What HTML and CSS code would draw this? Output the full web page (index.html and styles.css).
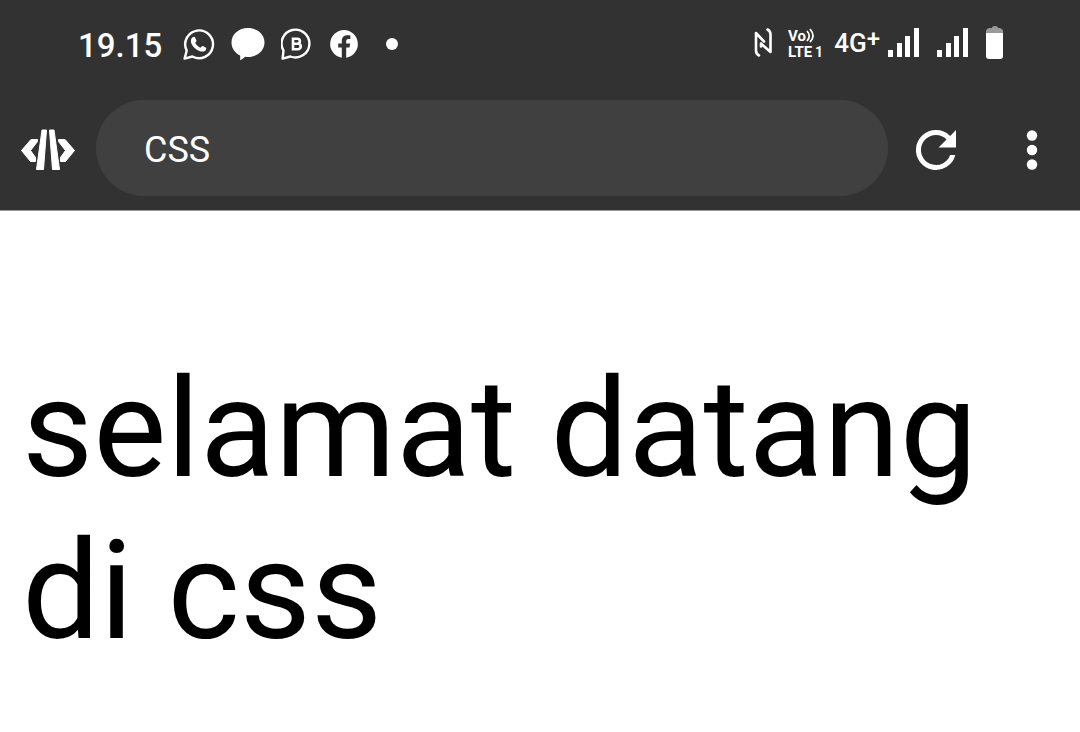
FILE: index.html
```html
<!DOCTYPE html>
<html lang="id">
<head>
<meta charset="utf-8">
<meta name="viewport" content="width=device-width, initial-scale=1">
<title>CSS</title>
<link rel="stylesheet" href="styles.css">
</head>
<body>
<header class="top">
  <div class="status">
    <div class="status-left">
      <time class="clock">19.15</time>
      <svg class="icon" width="32" height="32" viewBox="0 0 32 32" aria-label="WhatsApp">
        <path d="M1.6 30.6 3.7 22.6A13.9 13.9 0 1 1 9.4 28.5Z" fill="none" stroke="#fff" stroke-width="2.4" stroke-linejoin="round"/>
        <path d="M9.6 9.2c.6-.7 1.8-.8 2.3 0l1.500 3.100c.3.7-.1 1.200-1.200 2.500 1.200 2.400 3 4 5.400 5 1-1.200 1.500-2 2.200-1.700l3 1.500c.8.5.5 1.900-.3 2.800-1.600 1.500-3.800 1.500-6.300.500-4-1.700-6.400-4.400-7.800-7.500-.9-2.300-.6-4.600 1.200-6.200Z" fill="#fff"/>
      </svg>
      <svg class="icon" width="34" height="34" viewBox="0 0 34 34" aria-label="Pesan">
        <path d="M17 1C26.500 1 33.500 7.200 33.500 15.500S26 30 17 30c-1 0-2-.1-3-.2-1.200 1.600-3 2.800-5 3.400.3-1.600.3-3.200.1-4.700C4 26 .5 21.500.5 15.500.5 7.200 7.500 1 17 1Z" fill="#fff"/>
      </svg>
      <svg class="icon" width="32" height="32" viewBox="0 0 32 32" aria-label="WhatsApp Business">
        <path d="M1.600 30.600 2.500 22.600A13.900 13.900 0 1 1 9.400 28.500Z" fill="none" stroke="#fff" stroke-width="2.400" stroke-linejoin="round"/>
        <path d="M12 10.700h4.400a2.400 2.400 0 0 1 0 5h-4.400zm0 5h5a2.700 2.700 0 0 1 0 5.500h-5z" fill="none" stroke="#fff" stroke-width="2.600"/>
      </svg>
      <svg class="icon" width="30" height="28" viewBox="-1 0 30 28" aria-label="Facebook">
        <path d="M14 0a14 14 0 0 1 2.200 27.800V17.600h3.300l.7-4h-4v-2.400c0-1.400.8-2.300 2.300-2.300h1.900V5.600c-5-1-8.600.5-8.600 5.400v2.600H8.200v4h3.600v10.200A14 14 0 0 1 14 0Z" fill="#fff"/>
      </svg>
      <span class="more-dot"></span>
    </div>
    <div class="status-right">
      <svg class="icon" width="18" height="30" viewBox="0 0 18 30" aria-label="NFC">
        <path d="M5 27.500Q2 26 2 22.500V5L10 13.500M13.500 1.500Q16.500 3 16.500 6.500V24L7 15.500V18.500" fill="none" stroke="#fff" stroke-width="2.600" stroke-linejoin="round" stroke-linecap="round"/>
      </svg>
      <svg class="icon volte" width="40" height="34" viewBox="-2 -3 40 34">
        <text x="0" y="12" class="volte-text">Vo</text>
        <text x="0" y="28" class="volte-text">LTE</text>
        <text x="27" y="28" class="volte-sim">1</text>
        <path d="M19 2q4.500 5 0 10M22 0q6 7 0 13" fill="none" stroke="#fff" stroke-width="1.800"/>
      </svg>
      <span class="network">4G<span class="plus">+</span></span>
      <svg class="icon signal" width="33" height="30" viewBox="0 0 33 30" aria-label="Sinyal SIM 1">
        <path d="M0 22h5v7H0zM9 15h5v14H9zM17 8h5v21h-5zM26 0h5v29h-5z" fill="#fff"/>
      </svg>
      <svg class="icon" width="33" height="30" viewBox="0 0 33 30" aria-label="Sinyal SIM 2">
        <path d="M0 22h5v7H0zM9 15h5v14H9zM17 8h5v21h-5zM26 0h5v29h-5z" fill="#fff"/>
      </svg>
      <svg class="icon" width="18" height="34" viewBox="0 0 18 34" aria-label="Baterai">
        <path d="M0 7V5q0-2 3-3h3q0-2 3-2t3 2h2q3 1 3 3v2z" fill="#999"/>
        <path d="M0 7h17v23q0 3-3 3H3q-3 0-3-3z" fill="#fff"/>
      </svg>
    </div>
  </div>
  <div class="toolbar">
    <button class="tool" type="button" aria-label="Kode">
      <svg width="56" height="44" viewBox="0 0 56 44">
        <path d="M1.500 22.500 11 11.500H17.500V13.500L10.500 22.500 15.500 29.500V33.500H10.500ZM54.500 22.500 45 11.500H38.500V13.500L45.500 22.500 40.500 29.500V33.500H45.500Z" fill="#fff" stroke="#fff" stroke-linejoin="round"/>
        <path d="M22 2h4.500L23.500 41.500H16.500ZM34 2h-4.500L32.500 41.500H39.500Z" fill="#fff" stroke="#fff" stroke-linejoin="round"/>
      </svg>
    </button>
    <input class="address" type="text" value="CSS" aria-label="Judul halaman">
    <button class="tool" type="button" aria-label="Muat ulang">
      <svg width="60" height="62" viewBox="0 0 60 62">
        <path transform="translate(0 1) scale(2.500)" d="M17.650 6.350A7.960 7.960 0 0 0 12 4a8 8 0 1 0 7.730 10h-2.080A6 6 0 1 1 12 6c1.660 0 3.140.690 4.220 1.780L13 11h7V4z" fill="#fff"/>
      </svg>
    </button>
    <button class="tool" type="button" aria-label="Menu">
      <svg width="12" height="42" viewBox="0 0 12 42">
        <circle cx="6" cy="6.500" r="5.200" fill="#fff"/><circle cx="6" cy="21" r="5.200" fill="#fff"/><circle cx="6" cy="35.500" r="5.200" fill="#fff"/>
      </svg>
    </button>
  </div>
</header>
<main class="page">
  <p class="greeting">selamat datang di css</p>
</main>
</body>
</html>
```
FILE: styles.css
```css
* {
  box-sizing: border-box;
}

body {
  margin: 0;
  background: #fff;
  color: #000;
  font-family: Roboto, "Liberation Sans", sans-serif;
}

.top {
  background: #323232;
  color: #fff;
  border-bottom: 1px solid #999;
}

.status {
  display: flex;
  align-items: center;
  justify-content: space-between;
  height: 86px;
  padding: 0 76px 0 78px;
}

.status-left,
.status-right {
  display: flex;
  align-items: center;
  gap: 16px;
}

.status-left {
  padding-top: 1px;
}

.icon {
  display: block;
  flex: none;
}

.clock {
  margin-right: 5px;
  padding-top: 4px;
  font-size: 33px;
  font-weight: 500;
  line-height: 40px;
}

.more-dot {
  width: 12px;
  height: 12px;
  margin-left: 11px;
  border-radius: 50%;
  background: #fff;
}

.volte {
  margin: 0 -2px;
}

.volte-text {
  font-size: 15px;
  font-weight: 700;
  fill: #fff;
}

.volte-sim {
  font-size: 14px;
  font-weight: 700;
  fill: #fff;
}

.network {
  display: flex;
  margin-left: -6px;
  font-size: 26px;
  font-weight: 500;
  line-height: 32px;
}

.plus {
  font-size: 24px;
  line-height: 24px;
}

.signal {
  margin-left: -8px;
}

.toolbar {
  display: flex;
  align-items: center;
  padding: 14px 0;
}

.tool {
  display: flex;
  align-items: center;
  justify-content: center;
  flex: none;
  width: 96px;
  height: 96px;
  padding: 4px 0 0;
  border: 0;
  background: none;
}

.address {
  flex: 1;
  min-width: 0;
  height: 96px;
  padding: 4px 48px 0;
  border: 0;
  border-radius: 48px;
  outline: 0;
  background: #404040;
  color: #fff;
  font: 400 36px Roboto, "Liberation Sans", sans-serif;
}

.page {
  padding: 137px 22px 24px;
}

.greeting {
  margin: 0;
  font-size: 138px;
  line-height: 162px;
}
```
